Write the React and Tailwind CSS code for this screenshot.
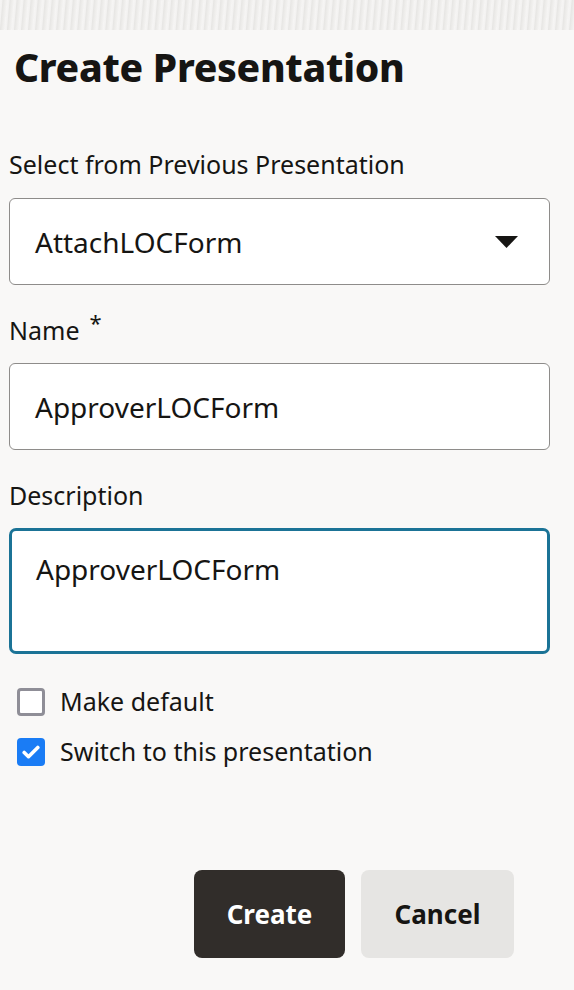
import React from 'react';

const font = { fontFamily: '"Noto Sans", "Open Sans", sans-serif' };

const Field = ({ label, required, children, className = '' }) => (
  <div className={className}>
    <div className="flex items-start text-[25px] leading-[32px] text-[#161513]">
      <span>{label}</span>
      {required && <span className="ml-[10px] -mt-[8px] text-[22px]">*</span>}
    </div>
    {children}
  </div>
);

const Checkbox = ({ checked, label }) => (
  <label className="flex items-center gap-[15px] h-[28px]">
    {checked ? (
      <span className="w-[28px] h-[28px] rounded-[4px] bg-[#1a7cf5] flex items-center justify-center">
        <svg width="18" height="14" viewBox="0 0 18 14" fill="none">
          <path d="M2.2 7.5l4.3 4.2L15.8 2.5" stroke="white" strokeWidth="3.6" strokeLinecap="round" strokeLinejoin="round" />
        </svg>
      </span>
    ) : (
      <span className="w-[28px] h-[28px] rounded-[4px] border-[3px] border-[#8f8e97] bg-white" />
    )}
    <span className="text-[25px] text-[#161513]">{label}</span>
  </label>
);

export default function App() {
  return (
    <div style={font} className="w-[574px] h-[990px] bg-[#f9f8f7] overflow-hidden">
      <div className="h-[30px] bg-[#edecea] bg-[repeating-linear-gradient(95deg,#f6f5f4_0px,#f3f2f1_2px,#e7e6e4_3px,#eeedeb_5px,#f4f3f2_7px)]" />

      <div className="pl-[9px] w-[550px]">
        <h1 className="pl-[5px] pt-[11px] text-[39px] leading-[52px] font-extrabold text-[#161513] tracking-[-0.3px]">
          Create Presentation
        </h1>

        <Field label="Select from Previous Presentation" className="mt-[55px]">
          <div className="mt-[18px] h-[87px] rounded-[6px] border-[1.5px] border-[#8e8c8a] bg-white flex items-center justify-between pl-[25px] pr-[31px]">
            <span className="text-[28px] text-[#161513]">AttachLOCForm</span>
            <svg width="23" height="12" viewBox="0 0 23 12">
              <path d="M0 0h23L11.5 12z" fill="#161513" />
            </svg>
          </div>
        </Field>

        <Field label="Name" required className="mt-[29px]">
          <div className="mt-[17px] h-[87px] rounded-[6px] border-[1.5px] border-[#8e8c8a] bg-white flex items-center pl-[25px]">
            <span className="text-[28px] text-[#161513]">ApproverLOCForm</span>
          </div>
        </Field>

        <Field label="Description" className="mt-[29px]">
          <div className="mt-[17px] h-[126px] rounded-[7px] border-[3px] border-[#1b7396] bg-white pl-[24px] pt-[17px]">
            <span className="text-[28px] text-[#161513]">ApproverLOCForm</span>
          </div>
        </Field>

        <div className="mt-[34px] pl-[8px] flex flex-col gap-[22px]">
          <Checkbox label="Make default" />
          <Checkbox checked label="Switch to this presentation" />
        </div>

        <div className="mt-[104px] flex gap-[16px] pl-[185px]">
          <button className="w-[151px] h-[88px] rounded-[8px] bg-[#312d2a] text-white text-[26px] font-bold">
            Create
          </button>
          <button className="w-[153px] h-[88px] rounded-[8px] bg-[#e6e5e3] text-[#161513] text-[26px] font-bold">
            Cancel
          </button>
        </div>
      </div>
    </div>
  );
}
